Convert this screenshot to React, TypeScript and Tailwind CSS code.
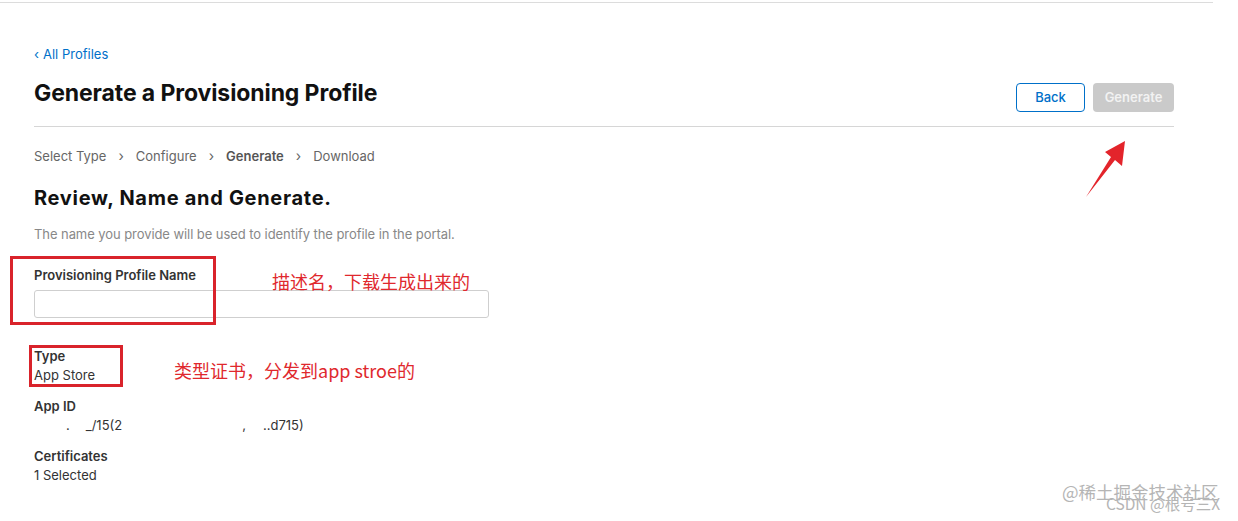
import React from "react";

export default function App() {
  return (
    <div
      className="relative w-[1238px] h-[521px] bg-white overflow-hidden"
      style={{ fontFamily: 'Inter, "Noto Sans CJK SC", sans-serif' }}
    >
      <div className="mt-[2px] h-px w-[1213px] bg-[#dcdcdc]" />
      <div className="pl-[34px] w-[1174px]">
        <div className="mt-[43px] text-[13px] leading-[16px] text-[#0070c9]">
          <span className="mr-[4px]">‹</span>All Profiles
        </div>
        <div className="flex items-start justify-between mt-[17px]">
          <h1 className="text-[23px] leading-[28px] font-bold text-[#111] tracking-[-0.1px]">
            Generate a Provisioning Profile
          </h1>
          <div className="flex gap-[8px] mt-[4px]">
            <button className="w-[69px] h-[29px] rounded-[4px] border border-[#0070c9] text-[13px] text-[#0070c9] font-medium">
              Back
            </button>
            <button className="w-[81px] h-[29px] rounded-[4px] bg-[#cacaca] text-[13px] text-[#f2f2f2] font-semibold">
              Generate
            </button>
          </div>
        </div>
        <div className="mt-[14px] h-px bg-[#d6d6d6]" />
        <div className="mt-[21px] flex items-center text-[13px] leading-[16px] text-[#666]">
          <span>Select Type</span>
          <span className="mx-[12px] text-[14px]">›</span>
          <span>Configure</span>
          <span className="mx-[12px] text-[14px]">›</span>
          <span className="font-semibold text-[#555]">Generate</span>
          <span className="mx-[12px] text-[14px]">›</span>
          <span>Download</span>
        </div>
        <h2 className="mt-[22px] text-[20px] leading-[24px] font-bold text-[#111] tracking-[0.7px]">
          Review, Name and Generate.
        </h2>
        <p className="mt-[16px] text-[13px] leading-[16px] text-[#888] tracking-[-0.07px]">
          The name you provide will be used to identify the profile in the portal.
        </p>
        <div className="mt-[25px] text-[13px] leading-[16px] font-semibold text-[#333]">
          Provisioning Profile Name
        </div>
        <input
          className="mt-[7px] block w-[455px] h-[28px] rounded-[3px] border border-[#cfcfcf] outline-none"
          type="text"
        />
        <div className="mt-[29px] text-[13px] leading-[19px] font-semibold text-[#333]">Type</div>
        <div className="text-[13px] leading-[19px] text-[#333]">App Store</div>
        <div className="mt-[12px] text-[13px] leading-[19px] font-semibold text-[#333]">App ID</div>
        <div className="text-[13px] leading-[19px] text-[#333] flex">
          <span className="ml-[32px]">.</span>
          <span className="ml-[16px]">_/15(2</span>
          <span className="ml-[120px]">,</span>
          <span className="ml-[17px]">..d715)</span>
        </div>
        <div className="mt-[12px] text-[13px] leading-[19px] font-semibold text-[#333]">Certificates</div>
        <div className="text-[13px] leading-[19px] text-[#333]">1 Selected</div>
      </div>

      {/* annotation boxes */}
      <div className="absolute left-[10px] top-[256px] w-[206px] h-[69px] border-[3px] border-[#d9232b]" />
      <div className="absolute left-[29px] top-[345px] w-[94px] h-[42px] border-[3px] border-[#d9232b]" />
      <div
        className="absolute left-[272px] top-[270px] text-[18px] leading-[22px] text-[#e0282d]"
        style={{ fontFamily: '"Noto Sans CJK SC", sans-serif' }}
      >
        描述名，下载生成出来的
      </div>
      <div
        className="absolute left-[174px] top-[359px] text-[18px] leading-[22px] text-[#e0282d]"
        style={{ fontFamily: '"Noto Sans CJK SC", sans-serif' }}
      >
        类型证书，分发到app stroe的
      </div>
      <svg className="absolute left-0 top-0" width="1238" height="521">
        <polygon
          points="1125,141 1105,152 1111,157 1086,197 1115,160 1122,166"
          fill="#e3242b"
        />
      </svg>

      {/* watermark */}
      <div
        className="absolute left-[1062px] top-[481px] text-[17.5px] leading-[22px] text-[#b5b5b5]"
        style={{ fontFamily: '"Noto Sans CJK SC", sans-serif' }}
      >
        @稀土掘金技术社区
      </div>
      <div
        className="absolute left-[1106px] top-[494px] text-[15.5px] leading-[18px] text-[#b5b5b5]"
        style={{ fontFamily: '"Noto Sans CJK SC", sans-serif' }}
      >
        CSDN @根号三X
      </div>
    </div>
  );
}
